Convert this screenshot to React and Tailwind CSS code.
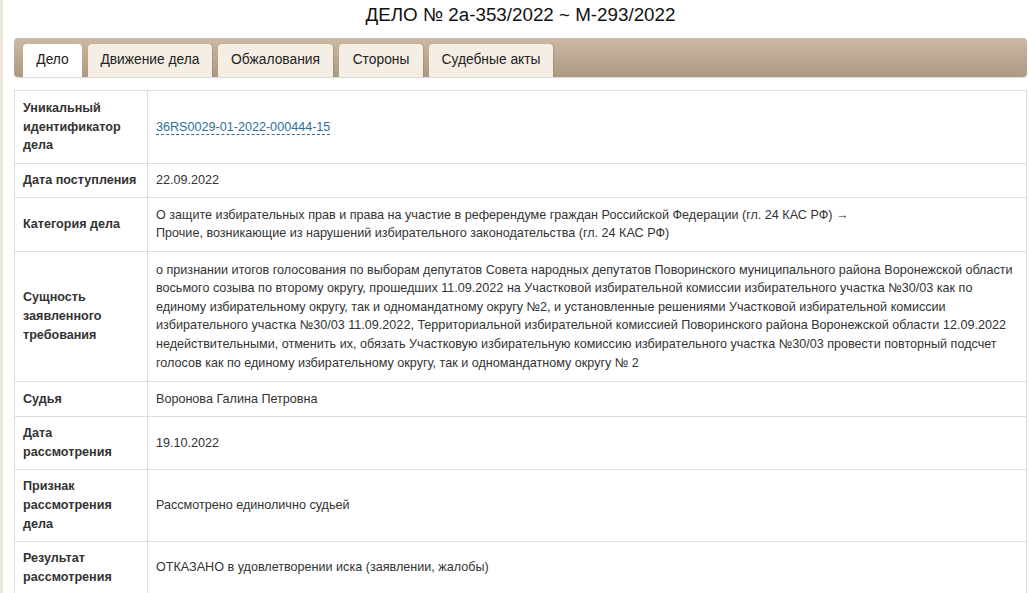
import React from "react";

const rows = [
  { label: ["Уникальный", "идентификатор", "дела"], value: "link", py: "py-[8px]" },
  { label: ["Дата поступления"], value: "22.09.2022", py: "py-[7.5px]" },
  {
    label: ["Категория дела"],
    py: "py-[7.5px]",
    value: (
      <>
        О защите избирательных прав и права на участие в референдуме граждан Российской Федерации (гл. 24 КАС РФ){" "}
        <span className="leading-[0]">→</span>
        <br />
        Прочие, возникающие из нарушений избирательного законодательства (гл. 24 КАС РФ)
      </>
    ),
  },
  {
    label: ["Сущность", "заявленного", "требования"],
    py: "py-[9px]",
    value:
      "о признании итогов голосования по выборам депутатов Совета народных депутатов Поворинского муниципального района Воронежской области восьмого созыва по второму округу, прошедших 11.09.2022 на Участковой избирательной комиссии избирательного участка №30/03 как по единому избирательному округу, так и одномандатному округу №2, и установленные решениями Участковой избирательной комиссии избирательного участка №30/03 11.09.2022, Территориальной избирательной комиссией Поворинского района Воронежской области 12.09.2022 недействительными, отменить их, обязать Участковую избирательную комиссию избирательного участка №30/03 провести повторный подсчет голосов как по единому избирательному округу, так и одномандатному округу № 2",
  },
  { label: ["Судья"], value: "Воронова Галина Петровна", py: "py-[7.5px]" },
  { label: ["Дата", "рассмотрения"], value: "19.10.2022", py: "py-[7.5px]" },
  { label: ["Признак", "рассмотрения", "дела"], value: "Рассмотрено единолично судьей", py: "py-[7.5px]" },
  { label: ["Результат", "рассмотрения"], value: "ОТКАЗАНО в удовлетворении иска (заявлении, жалобы)", py: "py-[7.5px]" },
];

const tabs = [
  { t: "Дело", w: "w-[59px]" },
  { t: "Движение дела", w: "w-[124px]" },
  { t: "Обжалования", w: "w-[115px]" },
  { t: "Стороны", w: "w-[84px]" },
  { t: "Судебные акты", w: "w-[124px]" },
];

export default function App() {
  return (
    <div className="min-h-[593px] bg-white border-l-[3px] border-[#ece7da] font-['Liberation_Sans',Arial,sans-serif] text-[#333]">
      <div className="pl-[11px] pr-[2px]">
        <h1 className="h-[38px] pt-[2px] text-center text-[18.8px] leading-[26px] text-[#111]">
          ДЕЛО № 2а-353/2022 ~ М-293/2022
        </h1>
        <div className="flex h-[39px] items-end gap-[6px] rounded-[4px] bg-gradient-to-b from-[#cbb9a3] to-[#ad9981] px-[9px] shadow-[0_1px_1px_rgba(0,0,0,0.15)]">
          {tabs.map((t, i) => (
            <div
              key={t.t}
              className={
                i === 0
                  ? `${t.w} h-[33px] rounded-t-[4px] bg-white text-center text-[13.8px] leading-[31px] text-[#222]`
                  : `${t.w} h-[33px] rounded-t-[4px] bg-[#f4eee5] text-center text-[13.8px] leading-[31px] text-[#222] shadow-[1px_0_1px_rgba(0,0,0,0.12)]`
              }
            >
              {t.t}
            </div>
          ))}
        </div>
        <table className="mt-[13px] w-full border-collapse border border-[#dddddd] text-[12.6px] leading-[18.6px]">
          <tbody>
            {rows.map((r, i) => (
              <tr key={i}>
                <td className={`w-[133px] border border-[#dddddd] px-[8px] ${r.py} align-middle font-bold text-[#333]`}>
                  {r.label.map((l, j) => (
                    <div key={j}>{l}</div>
                  ))}
                </td>
                <td className={`border border-[#dddddd] px-[8px] ${r.py} align-middle text-[#333]`}>
                  {r.value === "link" ? (
                    <span className="border-b border-dashed border-[#2f6e9c] text-[#2f6e9c]">
                      36RS0029-01-2022-000444-15
                    </span>
                  ) : (
                    r.value
                  )}
                </td>
              </tr>
            ))}
          </tbody>
        </table>
      </div>
    </div>
  );
}
